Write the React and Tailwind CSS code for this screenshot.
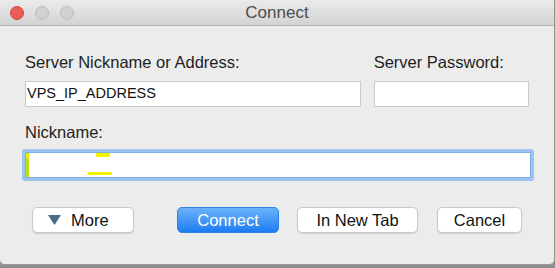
import React from "react";

const font = { fontFamily: '"Liberation Sans", Arial, sans-serif' };

function Light({ color, border }) {
  return <span className={`block w-[14px] h-[14px] rounded-full border ${color} ${border}`} />;
}

export default function App() {
  return (
    <div className="w-[555px] h-[268px] bg-[#8f8f8f] overflow-hidden" style={font}>
      <div className="w-[554px] h-[265px] bg-[#ececec] rounded-b-[5px] border-b border-[#9a9a9a] flex flex-col">
        {/* title bar */}
        <div className="relative h-[26px] shrink-0 bg-gradient-to-b from-[#ebebeb] to-[#d3d3d3] border-b border-[#b4b4b4] flex items-center justify-center">
          <div className="absolute left-[10px] top-[6px] flex gap-[11px]">
            <Light color="bg-[#ec5b56]" border="border-[#d8443f]" />
            <Light color="bg-[#d1d1d1]" border="border-[#bcbcbc]" />
            <Light color="bg-[#d1d1d1]" border="border-[#bcbcbc]" />
          </div>
          <span className="text-[17px] leading-[25px] text-[#4d4d4d]">Connect</span>
        </div>

        {/* body */}
        <div className="px-[25px] pt-[27px] flex flex-col">
          <div className="flex gap-[13px]">
            <div className="w-[337px] flex flex-col">
              <label className="text-[16.5px] leading-[19px] text-[#1e1e1e]">Server Nickname or Address:</label>
              <div className="mt-[9px] h-[26px] bg-white border border-[#c9c9c9] flex items-center pl-[1px] text-[14.5px] text-[#111]">
                VPS_IP_ADDRESS
              </div>
            </div>
            <div className="w-[156px] flex flex-col">
              <label className="text-[16.5px] leading-[19px] text-[#1e1e1e]">Server Password:</label>
              <div className="mt-[9px] h-[26px] bg-white border border-[#c9c9c9]" />
            </div>
          </div>

          <label className="mt-[16px] text-[16.5px] leading-[19px] text-[#1e1e1e]">Nickname:</label>
          <div className="relative mt-[10px] w-[506px] h-[26px] bg-white border border-[#7eaee6] ring-[3px] ring-[#9dc4f1] rounded-[1px] overflow-hidden">
            <div className="absolute left-0 top-0 w-[3px] h-full bg-[#b9df10]" />
            <div className="absolute left-[70px] top-0 w-[14px] h-[4px] bg-[#f3f300]" />
            <div className="absolute left-[62px] bottom-[2px] w-[24px] h-[3px] bg-[#f3f300]" />
            <div className="absolute left-0 top-[1px] w-[4px] h-[4px] bg-[#f3f300]" />
          </div>

          {/* buttons */}
          <div className="mt-[29px] ml-[7px] flex items-center text-[16.5px]">
            <button className="w-[102px] h-[26px] bg-white border border-[#c8c8c8] rounded-[5px] shadow-[0_1px_1px_rgba(0,0,0,0.12)] flex items-center text-[#111]">
              <svg width="13" height="10" viewBox="0 0 13 10" className="ml-[15px] mr-[10px]">
                <polygon points="0,0 13,0 6.5,10" fill="#4d6a84" />
              </svg>
              More
            </button>
            <button className="ml-[43px] w-[102px] h-[26px] rounded-[5px] border border-[#2b80ec] bg-gradient-to-b from-[#6ab3fb] to-[#1a7bf2] text-white flex items-center justify-center">
              Connect
            </button>
            <button className="ml-[18px] w-[121px] h-[26px] bg-white border border-[#c8c8c8] rounded-[5px] shadow-[0_1px_1px_rgba(0,0,0,0.12)] flex items-center justify-center text-[#111]">
              In New Tab
            </button>
            <button className="ml-[19px] w-[85px] h-[26px] bg-white border border-[#c8c8c8] rounded-[5px] shadow-[0_1px_1px_rgba(0,0,0,0.12)] flex items-center justify-center text-[#111]">
              Cancel
            </button>
          </div>
        </div>
      </div>
    </div>
  );
}
